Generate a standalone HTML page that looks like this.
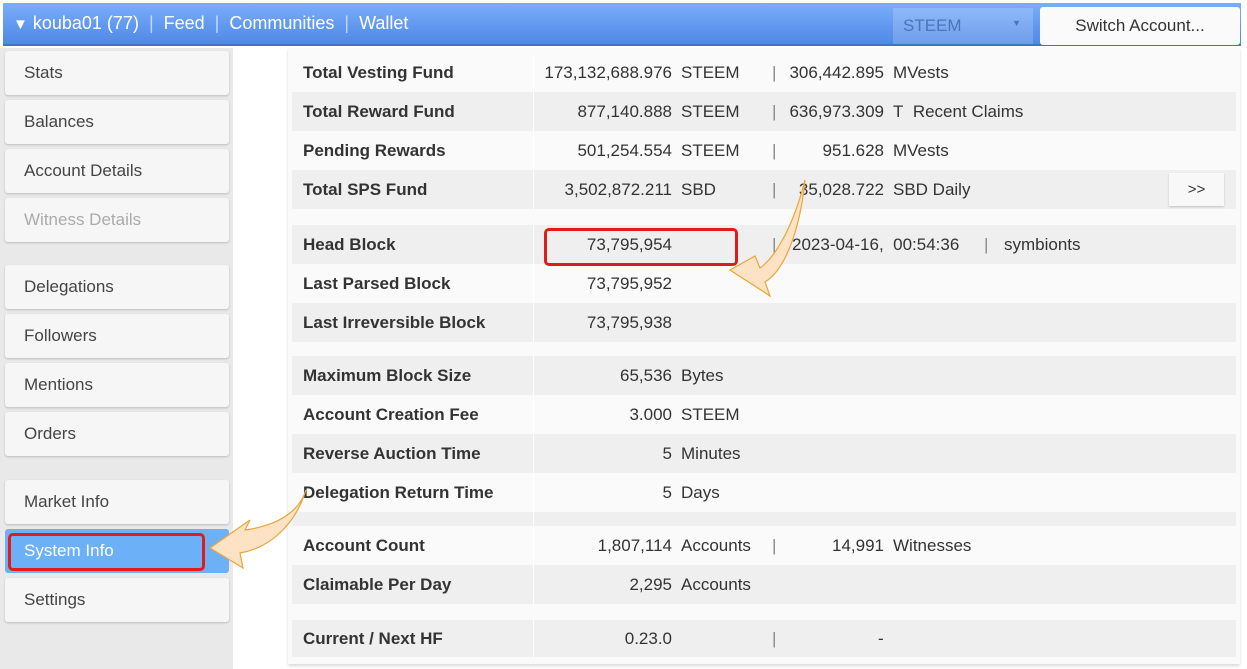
<!DOCTYPE html>
<html><head><meta charset="utf-8"><style>
*{margin:0;padding:0;box-sizing:border-box}
body{width:1247px;height:669px;overflow:hidden;background:#fff;font-family:"Liberation Sans",sans-serif;color:#333;position:relative}
.hdr{position:absolute;left:3px;top:3px;width:1238px;height:43px;background:linear-gradient(#7aaefb,#4f88e6);border-bottom:2px solid #3f74c9}
.hdr .t{position:absolute;left:10px;top:10px;color:#fff;font-size:18px;white-space:pre}
.sel{position:absolute;left:890px;top:5px;width:140px;height:36px;background:rgba(255,255,255,.18);color:#4a76b8;font-size:17px;padding:8px 10px}
.sel span{position:absolute;right:12px;top:10px;font-size:9px}
.sw{position:absolute;left:1037px;top:4px;width:200px;height:38px;background:#fafafa;border-radius:3px;color:#333;font-size:17px;text-align:center;line-height:38px}
.side{position:absolute;left:0;top:48px;width:233px;height:621px;background:#e9e9e9}
.btn{position:absolute;left:5px;width:224px;height:44px;background:#f6f6f6;border-radius:3px;box-shadow:0 1px 2px rgba(0,0,0,.2);font-size:17px;padding:12px 0 0 19px;color:#444}
.main{position:absolute;left:288px;top:48px;width:952px;height:616px;background:#fafafa;box-shadow:0 2px 3px rgba(0,0,0,.15)}
.r{position:absolute;left:4px;width:944px;font-size:17px}
.r.g{background:#efefef}
.r .l{position:absolute;left:11px;font-weight:bold;color:#333}
.r .c{position:absolute;left:241px;top:0;bottom:0;width:1px;background:#fff}
.r .v{position:absolute;right:564px;text-align:right}
.r .u{position:absolute;left:389px}
.r .p{position:absolute;left:480px;color:#888}
.r .v2{position:absolute;right:352px;text-align:right}
.r .u2{position:absolute;left:601px}
</style></head><body>
<div class="hdr"><div class="t"><span style="font-size:15px">▼</span> kouba01 (77)  <span style="opacity:.6">|</span>  Feed  <span style="opacity:.6">|</span>  Communities  <span style="opacity:.6">|</span>  Wallet</div>
<div class="sel">STEEM<span>▼</span></div><div class="sw">Switch Account...</div></div>
<div class="side">
<div class="btn" style="top:3px">Stats</div>
<div class="btn" style="top:52px">Balances</div>
<div class="btn" style="top:101px">Account Details</div>
<div class="btn" style="top:150px;color:#aaa">Witness Details</div>
<div class="btn" style="top:217px">Delegations</div>
<div class="btn" style="top:266px">Followers</div>
<div class="btn" style="top:315px">Mentions</div>
<div class="btn" style="top:364px">Orders</div>
<div class="btn" style="top:432px">Market Info</div>
<div class="btn" style="top:481px;background:#6cb1f7;color:#fff;box-shadow:none">System Info</div>
<div class="btn" style="top:530px">Settings</div>
</div>
<div style="position:absolute;left:8px;top:533px;width:197px;height:38px;border:3px solid #e01b1b;border-radius:5px"></div>
<div class="main">
<div class="r" style="top:5px;height:39px;line-height:40px"><span class="l">Total Vesting Fund</span><span class="c"></span><span class="v">173,132,688.976</span><span class="u">STEEM</span><span class="p">|</span><span class="v2">306,442.895</span><span class="u2">MVests</span></div>
<div class="r g" style="top:44px;height:39px;line-height:40px"><span class="l">Total Reward Fund</span><span class="c"></span><span class="v">877,140.888</span><span class="u">STEEM</span><span class="p">|</span><span class="v2">636,973.309</span><span class="u2">T&nbsp; Recent Claims</span></div>
<div class="r" style="top:83px;height:39px;line-height:40px"><span class="l">Pending Rewards</span><span class="c"></span><span class="v">501,254.554</span><span class="u">STEEM</span><span class="p">|</span><span class="v2">951.628</span><span class="u2">MVests</span></div>
<div class="r g" style="top:122px;height:39px;line-height:40px"><span class="l">Total SPS Fund</span><span class="c"></span><span class="v">3,502,872.211</span><span class="u">SBD</span><span class="p">|</span><span class="v2">35,028.722</span><span class="u2">SBD Daily</span>
<span style="position:absolute;left:877px;top:3px;width:55px;height:33px;background:#f8f8f8;box-shadow:0 1px 2px rgba(0,0,0,.2);line-height:33px;text-align:center;font-size:15px">&gt;&gt;</span></div>
<div class="r g" style="top:177px;height:39px;line-height:40px"><span class="l">Head Block</span><span class="c"></span><span class="v">73,795,954</span><span class="p">|</span><span style="position:absolute;left:500px">2023-04-16,&nbsp; 00:54:36</span><span class="p" style="left:692px">|</span><span style="position:absolute;left:712px">symbionts</span></div>
<div class="r" style="top:216px;height:39px;line-height:40px"><span class="l">Last Parsed Block</span><span class="c"></span><span class="v">73,795,952</span></div>
<div class="r g" style="top:255px;height:39px;line-height:40px"><span class="l">Last Irreversible Block</span><span class="c"></span><span class="v">73,795,938</span></div>
<div class="r g" style="top:308px;height:39px;line-height:40px"><span class="l">Maximum Block Size</span><span class="c"></span><span class="v">65,536</span><span class="u">Bytes</span></div>
<div class="r" style="top:347px;height:39px;line-height:40px"><span class="l">Account Creation Fee</span><span class="c"></span><span class="v">3.000</span><span class="u">STEEM</span></div>
<div class="r g" style="top:386px;height:39px;line-height:40px"><span class="l">Reverse Auction Time</span><span class="c"></span><span class="v">5</span><span class="u">Minutes</span></div>
<div class="r" style="top:425px;height:39px;line-height:40px"><span class="l">Delegation Return Time</span><span class="c"></span><span class="v">5</span><span class="u">Days</span></div>
<div class="r g" style="top:464px;height:14px"><span class="c"></span></div>
<div class="r" style="top:478px;height:39px;line-height:40px"><span class="l">Account Count</span><span class="c"></span><span class="v">1,807,114</span><span class="u">Accounts</span><span class="p">|</span><span class="v2">14,991</span><span class="u2">Witnesses</span></div>
<div class="r g" style="top:517px;height:39px;line-height:40px"><span class="l">Claimable Per Day</span><span class="c"></span><span class="v">2,295</span><span class="u">Accounts</span></div>
<div class="r g" style="top:572px;height:37px;line-height:37px"><span class="l">Current / Next HF</span><span class="c"></span><span class="v">0.23.0</span><span class="p">|</span><span style="position:absolute;left:586px">-</span></div>
</div>
<div style="position:absolute;left:544px;top:228px;width:194px;height:38px;border:3px solid #e01b1b;border-radius:5px"></div>
<svg style="position:absolute;left:0;top:0" width="1247" height="669">
<path d="M805 180 C800 230 785 270 765 282 L770 296 L730 270 L755 256 L760 268 C778 255 795 220 805 180 Z" fill="#fde2c4" stroke="#e9a53a" stroke-width="1.2"/>
<path d="M306 490 C300 510 280 525 245 530 L250 520 L210 548 L243 568 L240 553 C270 548 295 525 306 490 Z" fill="#fde2c4" stroke="#e9a53a" stroke-width="1.2"/>
</svg>
</body></html>
